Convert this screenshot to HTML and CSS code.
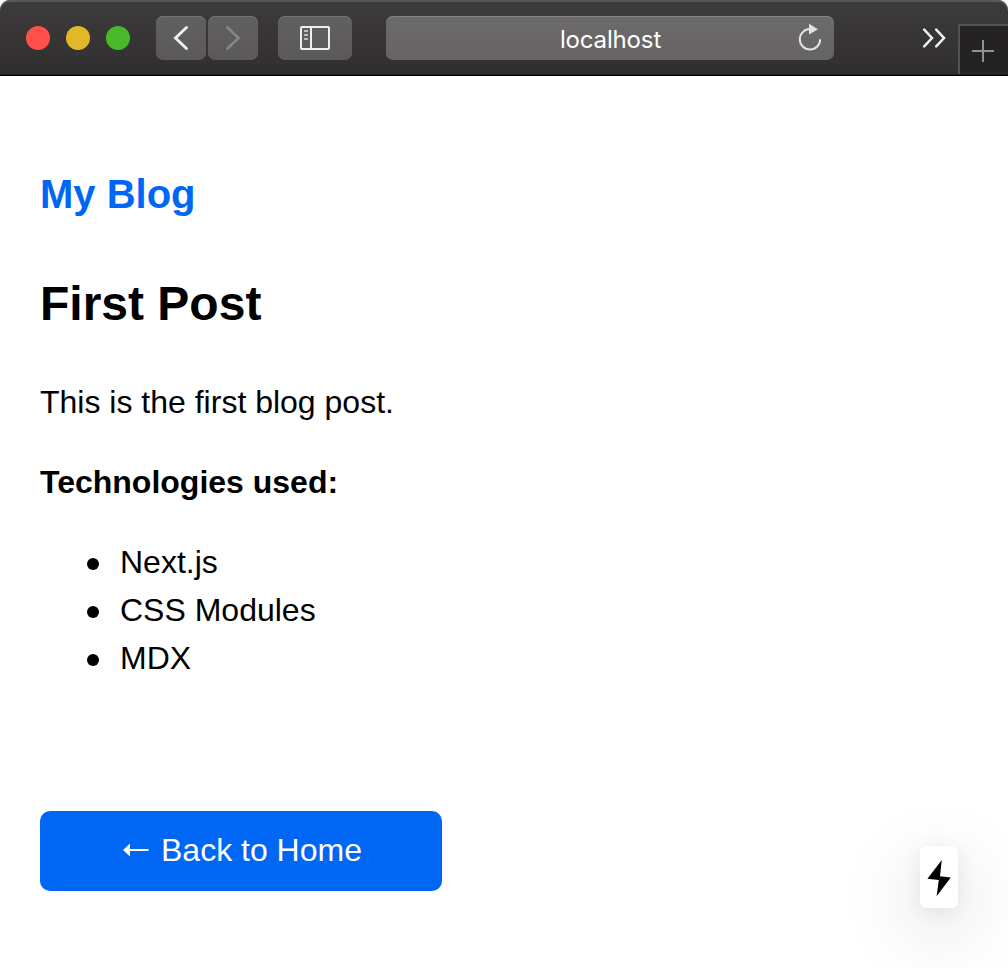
FILE: index.html
```html
<!DOCTYPE html>
<html lang="en">
<head>
<meta charset="utf-8">
<title>First Post</title>
<link rel="stylesheet" href="styles.css">
</head>
<body>
<header class="toolbar">
  <div class="lights">
    <span class="light red"></span><span class="light yellow"></span><span class="light green"></span>
  </div>
  <div class="nav">
    <span class="button"><svg width="50" height="44" viewBox="0 0 50 44"><path d="M30.500 11.500 19.500 22l11 10.500" fill="none" stroke="#efefef" stroke-width="2.900" stroke-linecap="round" stroke-linejoin="miter"/></svg></span>
    <span class="button"><svg width="50" height="44" viewBox="0 0 50 44"><path d="M19.500 11.500 30.500 22l-11 10.500" fill="none" stroke="#878686" stroke-width="2.700" stroke-linecap="round" stroke-linejoin="miter"/></svg></span>
  </div>
  <span class="button sidebar"><svg width="74" height="44" viewBox="0 0 74 44"><g fill="none" stroke="#efefef" stroke-width="2"><rect x="23" y="11" width="28" height="22" rx="1"/><path d="M33 11v22"/></g><path d="M26 15h4M26 19h4M26 23h4" stroke="#bdbcbc" stroke-width="2"/></svg></span>
  <div class="address">
    <span class="host">localhost</span>
    <svg class="reload" width="26" height="30" viewBox="0 0 26 30"><path d="M13 6.100A10.200 10.200 0 1 0 23.200 16.300" fill="none" stroke="#e3e3e3" stroke-width="2"/><path d="M12 0.700v10.800l9-5.300z" fill="#e3e3e3"/></svg>
  </div>
  <svg class="more" width="24" height="20" viewBox="0 0 24 20"><path d="M2.200 1.700 10 10l-7.800 8.300M14.200 1.700 22 10l-7.800 8.300" fill="none" stroke="#efefef" stroke-width="2.500" stroke-linecap="round"/></svg>
  <span class="new-tab"><svg width="22" height="22" viewBox="0 0 22 22"><path d="M11 0v22M0 11h22" stroke="#929191" stroke-width="2"/></svg></span>
</header>
<main class="page">
  <h2 class="brand">My Blog</h2>
  <h1 class="title">First Post</h1>
  <p class="text">This is the first blog post.</p>
  <p class="text strong">Technologies used:</p>
  <ul class="list">
    <li class="item">Next.js</li>
    <li class="item">CSS Modules</li>
    <li class="item">MDX</li>
  </ul>
  <a class="back"><svg class="arrow" width="26" height="14" viewBox="0 0 26 14"><path d="M0 7 7 0.500V6h18.500v2H7v5.500z" fill="#fff"/></svg>Back to Home</a>
</main>
<div class="indicator"><svg width="38" height="62" viewBox="0 0 38 62"><path d="M21.800 14 7.400 32.700 18.800 34 16.600 50.300 30.800 31.600 20 30.300z"/></svg></div>
</body>
</html>
```
FILE: styles.css
```css
body {
  margin: 0;
  height: 968px;
  overflow: hidden;
  background: #fff;
  color: #000;
  font-family: "Liberation Sans", Arial, sans-serif;
}
svg { display: block; }
.toolbar {
  box-sizing: border-box;
  height: 76px;
  display: flex;
  align-items: flex-start;
  padding: 16px 0 0 26px;
  overflow: hidden;
  border-radius: 10px 10px 0 0;
  border-bottom: 1px solid #000;
  background: linear-gradient(#3d3b3c, #302e2f);
  box-shadow: inset 0 2px 0 #575656, inset 0 -1px 0 #222021;
}
.lights { display: flex; gap: 16px; padding-top: 10px; }
.light { width: 24px; height: 24px; border-radius: 50%; }
.red { background: #ff5149; }
.yellow { background: #e2b828; }
.green { background: #48b928; }
.nav { display: flex; gap: 2px; margin-left: 26px; }
.button {
  height: 44px;
  border-radius: 7px;
  background: linear-gradient(#626061, #5a5859);
  box-shadow: inset 0 1px 0 #767575;
}
.sidebar { margin-left: 20px; }
.address {
  box-sizing: border-box;
  width: 448px;
  height: 44px;
  margin-left: 34px;
  padding: 0 11px 0 38px;
  display: flex;
  align-items: center;
  border-radius: 7px;
  background: linear-gradient(#6c6a6b, #656364);
  box-shadow: inset 0 1px 0 #858484;
}
.host {
  flex: 1;
  text-align: center;
  color: #fff;
  font: 24px/44px Inter, Roboto, sans-serif;
  letter-spacing: -0.150px;
  padding-top: 4px;
}
.reload { margin-bottom: 1px; }
.more { margin: 12px 0 0 88px; }
.new-tab {
  box-sizing: border-box;
  width: 50px;
  height: 50px;
  margin: 8px 0 0 12px;
  padding: 14px 0 0 12px;
  border: solid #535252;
  border-width: 2px 0 0 2px;
  background: #242223;
}
.page { padding: 88px 40px 0; }
.brand { margin: 0; font-size: 40px; line-height: 60px; color: #0066f4; }
.title { margin: 44px 0 0; font-size: 48px; line-height: 72px; }
.text { margin: 38px 0 0; font-size: 32px; line-height: 48px; }
.strong { margin-top: 32px; font-weight: bold; }
.list { margin: 32px 0 0; padding: 0 0 0 47px; list-style: none; font-size: 32px; line-height: 48px; }
.item { display: flex; align-items: center; gap: 21px; }
.item::before { content: ""; width: 12px; height: 12px; margin-top: 4px; border-radius: 50%; background: #000; }
.back {
  box-sizing: border-box;
  width: 402px;
  height: 80px;
  margin-top: 129px;
  padding: 0 0 2px 83px;
  display: flex;
  align-items: center;
  gap: 12px;
  border-radius: 10px;
  background: #0066f4;
  color: #fff;
  font-size: 32px;
  line-height: 48px;
}
.arrow { margin-bottom: 1px; }
.indicator {
  position: absolute;
  right: 50px;
  bottom: 60px;
  border-radius: 6px;
  background: #fff;
  box-shadow: 0 22px 80px rgba(0, 0, 0, .2), 0 4px 20px rgba(0, 0, 0, .08);
}
```
